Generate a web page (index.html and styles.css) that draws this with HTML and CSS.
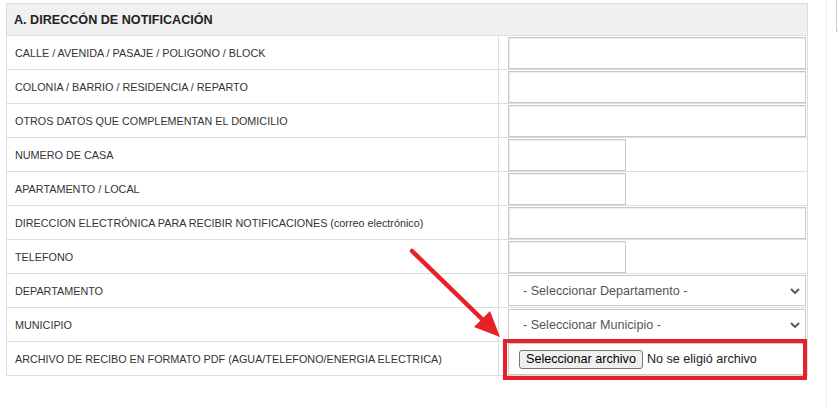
FILE: index.html
```html
<!DOCTYPE html>
<html lang="es">
<head>
<meta charset="UTF-8">
<meta name="viewport" content="width=device-width, initial-scale=1.0">
<title>Dirección de notificación</title>
<link rel="stylesheet" href="styles.css">
</head>
<body>

<div class="page">
  <div class="main">
    <table class="form-table">
      <colgroup>
        <col class="col-label">
        <col class="col-field">
      </colgroup>
      <tr>
        <th colspan="2">A. DIRECCÓN DE NOTIFICACIÓN</th>
      </tr>
      <tr>
        <td class="label">CALLE / AVENIDA / PASAJE / POLIGONO / BLOCK</td>
        <td class="field"><input type="text" class="input-wide"></td>
      </tr>
      <tr>
        <td class="label">COLONIA / BARRIO / RESIDENCIA / REPARTO</td>
        <td class="field"><input type="text" class="input-wide"></td>
      </tr>
      <tr>
        <td class="label">OTROS DATOS QUE COMPLEMENTAN EL DOMICILIO</td>
        <td class="field"><input type="text" class="input-wide"></td>
      </tr>
      <tr>
        <td class="label">NUMERO DE CASA</td>
        <td class="field"><input type="text" class="input-short"></td>
      </tr>
      <tr>
        <td class="label">APARTAMENTO / LOCAL</td>
        <td class="field"><input type="text" class="input-short"></td>
      </tr>
      <tr>
        <td class="label">DIRECCION ELECTRÓNICA PARA RECIBIR NOTIFICACIONES (correo electrónico)</td>
        <td class="field"><input type="email" class="input-wide"></td>
      </tr>
      <tr>
        <td class="label">TELEFONO</td>
        <td class="field"><input type="text" class="input-short"></td>
      </tr>
      <tr>
        <td class="label">DEPARTAMENTO</td>
        <td class="field">
          <div class="select-wrap">
            <select class="select">
              <option>- Seleccionar Departamento -</option>
            </select>
            <svg class="chevron" width="10" height="6" viewBox="0 0 10 6"><path d="M1 1l4 4 4-4" fill="none" stroke="#555" stroke-width="1.8"/></svg>
          </div>
        </td>
      </tr>
      <tr>
        <td class="label">MUNICIPIO</td>
        <td class="field">
          <div class="select-wrap">
            <select class="select">
              <option>- Seleccionar Municipio -</option>
            </select>
            <svg class="chevron" width="10" height="6" viewBox="0 0 10 6"><path d="M1 1l4 4 4-4" fill="none" stroke="#555" stroke-width="1.8"/></svg>
          </div>
        </td>
      </tr>
      <tr>
        <td class="label">ARCHIVO DE RECIBO EN FORMATO PDF (AGUA/TELEFONO/ENERGIA ELECTRICA)</td>
        <td class="field">
          <div class="file-box">
            <button type="button" class="file-btn">Seleccionar archivo</button>
            <span class="file-name">No se eligió archivo</span>
          </div>
        </td>
      </tr>
    </table>
  </div>
  <div class="side">
    <div class="side-box"></div>
  </div>
</div>

<div class="highlight"></div>
<svg class="arrow" width="838" height="407" viewBox="0 0 838 407">
  <line x1="412" y1="251" x2="484" y2="321" stroke="#e8202a" stroke-width="4.5" stroke-linecap="round"/>
  <polygon points="500,337 474,327 490,311" fill="#e8202a"/>
</svg>

</body>
</html>
```

FILE: styles.css
```css
body {
  margin: 0;
  font-family: "Liberation Sans", Arial, sans-serif;
  color: #333;
  background: #fff;
}
.page {
  display: flex;
  height: 407px;
  overflow: hidden;
}
.main {
  flex-shrink: 0;
  width: 826px;
  padding: 3px 0 0 6px;
  box-sizing: border-box;
}
.side {
  flex-shrink: 0;
  border-left: 1px solid #eee;
  padding-left: 9px;
}
.side-box {
  width: 40px;
  height: 31px;
  border: 1px solid #ccc;
  border-top: none;
}
.form-table {
  width: 802px;
  border-collapse: collapse;
  table-layout: fixed;
}
.col-label {
  width: 492px;
}
.form-table th,
.form-table td {
  border: 1px solid #ddd;
}
.form-table th {
  background-color: #f0f0f0;
  height: 31px;
  padding: 0 7px;
  text-align: left;
  font-size: 12.6px;
  font-weight: bold;
  color: #222;
}
.label {
  height: 33px;
  padding: 0 8px;
  font-size: 10.8px;
  vertical-align: middle;
}
.field {
  padding: 1px 1px 0 9px;
  vertical-align: top;
}
.input-wide,
.input-short {
  display: block;
  height: 32px;
  box-sizing: border-box;
  border: 1px solid #c8c8c8;
  box-shadow: inset 1px 1px 0 #ededed;
  margin: 0;
  padding: 0 8px;
  font-family: inherit;
}
.input-wide {
  width: 298px;
}
.input-short {
  width: 118px;
}
.select-wrap {
  position: relative;
  width: 298px;
}
.select {
  display: block;
  width: 298px;
  height: 31px;
  box-sizing: border-box;
  margin: 0;
  padding: 0 0 0 14px;
  border: 1px solid #c8c8c8;
  border-radius: 0;
  background: #fff;
  color: #555;
  font-family: inherit;
  font-size: 12.6px;
  appearance: none;
  -webkit-appearance: none;
}
.chevron {
  position: absolute;
  right: 6px;
  top: 13px;
}
.file-box {
  display: flex;
  align-items: center;
  width: 298px;
  height: 32px;
  box-sizing: border-box;
  border: 1px solid #c8c8c8;
  padding-left: 10px;
  gap: 4px;
}
.file-btn {
  height: 19px;
  padding: 0 6px;
  border: 1px solid #767676;
  border-radius: 3px;
  background: #efefef;
  color: #000;
  font-family: inherit;
  font-size: 12.6px;
  line-height: 17px;
}
.file-name {
  font-size: 12.6px;
  color: #222;
}
.highlight {
  position: absolute;
  left: 503px;
  top: 339px;
  width: 296px;
  height: 33px;
  border: 4px solid #e8202a;
}
.arrow {
  position: absolute;
  left: 0;
  top: 0;
  pointer-events: none;
}
```
